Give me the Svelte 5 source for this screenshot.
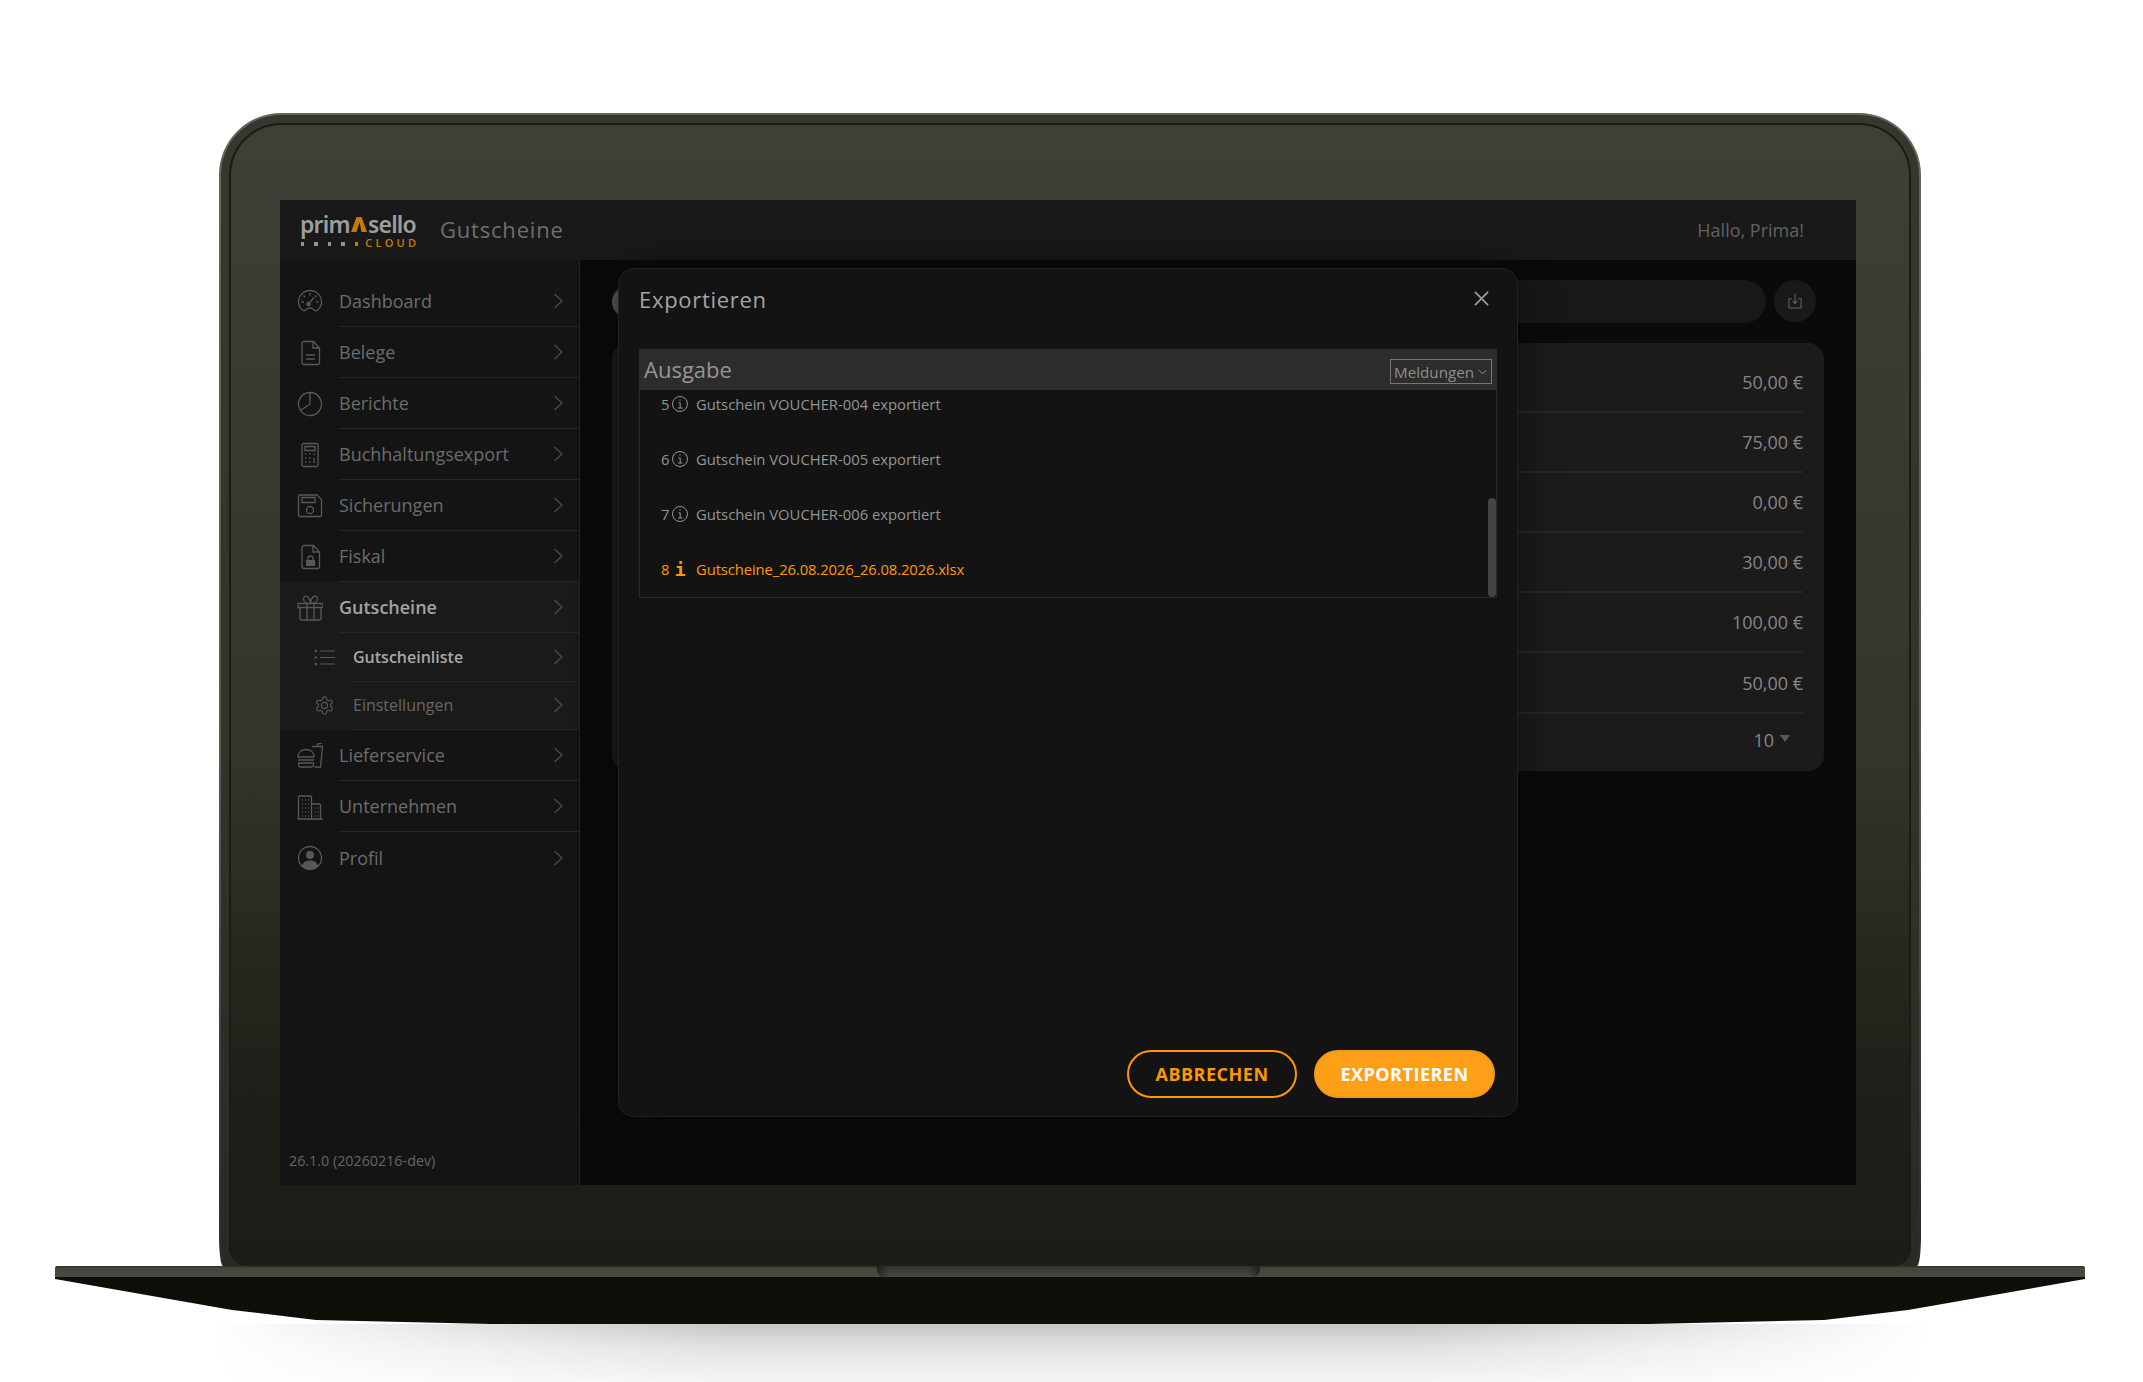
<script>
	const icons = {
		dashboard: 'M6 21.5C3.5 19.5 1.5 16.500 1.5 13a11.5 11.5 0 0 1 23 0c0 3.500-2 6.500-4.500 8.500-1.500 1-2.500-.5-3.500-1.300-2-1.400-5-1.400-7 0-1 .8-2 2.300-3.500 1.300zM13 4v2.500M6.500 6.500 8 8M19.500 6.500 18 8M4.500 13H7M19 13h2.500M11.500 15 17 8.500',
		doc: 'M7 1.5h9.500l6 6.500v14.500a2 2 0 0 1-2 2H7a2 2 0 0 1-2-2v-19a2 2 0 0 1 2-2zM16 1.5V8h6.500M9 15h9M9 19h9',
		pie: 'M13 1.500a11.500 11.500 0 1 1-9.500 18L13 13zM13 1.500A11.500 11.500 0 0 0 3.500 19.500',
		calc: 'M6.500 1.500h13A1.500 1.500 0 0 1 21 3v20a1.500 1.500 0 0 1-1.500 1.500h-13A1.500 1.500 0 0 1 5 23V3a1.500 1.500 0 0 1 1.500-1.500zM8 4.500h10v4H8zM8 12h1.500M12 12h1.500M16.500 12H18M8 16h1.500M12 16h1.500M8 20h1.500M12 20h1.500M17 16v5',
		disk: 'M3 2h17l4.500 4.500V22a1.500 1.500 0 0 1-1.500 1.500H3A1.500 1.500 0 0 1 1.500 22V3.500A1.500 1.500 0 0 1 3 2zM5 4.500h13v5H5zM16.500 17a3.500 3.500 0 1 1-7 0 3.500 3.500 0 0 1 7 0z',
		lock: 'M7 1.500h9.500l6 6.500v14.500a2 2 0 0 1-2 2H7a2 2 0 0 1-2-2v-19a2 2 0 0 1 2-2zM16 1.500V8h6.500M11 16v-1.500a2.500 2.500 0 0 1 5 0V16',
		gift: 'M1 8.500h25v4H1zM3 12.500v11A1.500 1.500 0 0 0 4.500 25h18a1.500 1.500 0 0 0 1.500-1.500v-11M10 8.500V25M17 8.500V25M13.500 8.500C10 8.500 6.500 7 6.500 4s3-3.500 4.500-2 2.500 3.500 2.500 6.500zM13.500 8.500c3.500 0 7-1.500 7-4.500s-3-3.500-4.500-2-2.500 3.500-2.500 6.500z',
		food: 'M1 14c0-5 3.500-7.500 8-7.500s8 2.500 8 7.500zM1 17h16M1.500 20h15v1.500a2.500 2.500 0 0 1-2.500 2.500H4a2.500 2.500 0 0 1-2.500-2.500zM15 3.500h10.500l-2 20.500h-6M20 3.500 21 .8l4-.5',
		build: 'M1.500 25V3a1 1 0 0 1 1-1h11a1 1 0 0 1 1 1v22M14.500 10h8a1 1 0 0 1 1 1v14M.5 25h25M5 6h1M8 6h1M11 6h1M5 10h1M8 10h1M11 10h1M5 14h1M8 14h1M11 14h1M5 18h1M8 18h1M11 18h1M5 22h1M8 22h1M11 22h1M17.500 14h1M20.500 14h1M17.500 18h1M20.500 18h1M17.500 22h1M20.500 22h1',
		user: 'M24.500 13a11.500 11.500 0 1 1-23 0 11.500 11.500 0 0 1 23 0z'
	};
	const gear = 'M12.22 2h-.44a2 2 0 0 0-2 2v.18a2 2 0 0 1-1 1.730l-.43.25a2 2 0 0 1-2 0l-.15-.08a2 2 0 0 0-2.730.730l-.22.38a2 2 0 0 0 .73 2.730l.15.1a2 2 0 0 1 1 1.720v.51a2 2 0 0 1-1 1.740l-.15.09a2 2 0 0 0-.73 2.730l.22.38a2 2 0 0 0 2.730.73l.15-.08a2 2 0 0 1 2 0l.43.25a2 2 0 0 1 1 1.730V20a2 2 0 0 0 2 2h.44a2 2 0 0 0 2-2v-.18a2 2 0 0 1 1-1.730l.43-.25a2 2 0 0 1 2 0l.15.08a2 2 0 0 0 2.730-.73l.22-.39a2 2 0 0 0-.73-2.730l-.15-.08a2 2 0 0 1-1-1.740v-.5a2 2 0 0 1 1-1.740l.15-.09a2 2 0 0 0 .73-2.730l-.22-.38a2 2 0 0 0-2.730-.73l-.15.08a2 2 0 0 1-2 0l-.43-.25a2 2 0 0 1-1-1.730V4a2 2 0 0 0-2-2z';

	const before = [
		{ label: 'Dashboard', icon: 'dashboard' },
		{ label: 'Belege', icon: 'doc' },
		{ label: 'Berichte', icon: 'pie' },
		{ label: 'Buchhaltungsexport', icon: 'calc' },
		{ label: 'Sicherungen', icon: 'disk' },
		{ label: 'Fiskal', icon: 'lock' }
	];
	const after = [
		{ label: 'Lieferservice', icon: 'food' },
		{ label: 'Unternehmen', icon: 'build' },
		{ label: 'Profil', icon: 'user' }
	];
	const amounts = ['50,00 €', '75,00 €', '0,00 €', '30,00 €', '100,00 €', '50,00 €'];
	const log = [
		{ n: 5, text: 'Gutschein VOUCHER-004 exportiert' },
		{ n: 6, text: 'Gutschein VOUCHER-005 exportiert' },
		{ n: 7, text: 'Gutschein VOUCHER-006 exportiert' },
		{ n: 8, text: 'Gutscheine_26.08.2026_26.08.2026.xlsx', file: true }
	];
</script>

{#snippet navIcon(name)}
	<svg class="nav-icon" viewBox="0 0 26 26" fill="none" stroke="currentColor" stroke-width="1.3">
		<path d={icons[name]} />
		{#if name === 'dashboard'}
			<circle cx="11.500" cy="15" r="1.600" fill="currentColor" />
		{/if}
		{#if name === 'lock'}
			<rect x="9" y="16" width="9" height="6" fill="currentColor" stroke="none" />
		{/if}
		{#if name === 'user'}
			<circle cx="13" cy="10" r="4" fill="currentColor" stroke="none" />
			<path d="M5 21c1-4 4-5.500 8-5.500s7 1.500 8 5.500c-2 2-5 3.500-8 3.500s-6-1.500-8-3.500z" fill="currentColor" stroke="none" />
		{/if}
	</svg>
{/snippet}

{#snippet chevron()}
	<svg class="chevron" viewBox="0 0 10 16" fill="none" stroke="currentColor" stroke-width="1.3">
		<path d="M1.500 1 9 8l-7.500 7" />
	</svg>
{/snippet}

{#snippet navRow(item, active)}
	<div class="row" class:active>
		<div class="icon-cell">{@render navIcon(item.icon)}</div>
		<div class="row-body">
			<span>{item.label}</span>
			{@render chevron()}
		</div>
	</div>
{/snippet}

<div class="page">
	<div class="lid">
		<div class="shell">
			<div class="bezel">
				<div class="screen">
					<header class="topbar">
						<div class="logo">
							<div class="logo-word">
								<span>prim</span>
								<svg class="logo-mark" viewBox="0 0 16 15"><path d="M5.500 0h5L16 15h-5.500L8.500 5 5.500 15H0z" fill="#c67b06" /></svg>
								<span>sello</span>
							</div>
							<div class="logo-sub">
								<div class="dots">
									<i></i><i></i><i></i><i></i><i class="last"></i>
								</div>
								<span>CLOUD</span>
							</div>
						</div>
						<div class="page-title">Gutscheine</div>
						<div class="hello">Hallo, Prima!</div>
					</header>

					<div class="body">
						<aside class="sidebar">
							{#each before as item}
								{@render navRow(item, false)}
							{/each}
							<div class="group">
								{@render navRow({ label: 'Gutscheine', icon: 'gift' }, true)}
								<div class="sub active">
									<div class="icon-cell">
										<svg class="sub-icon" viewBox="0 0 21 21" fill="none" stroke="currentColor" stroke-width="1.2">
											<path d="M6 4h15M6 10.500h15M6 17h15" />
											<circle cx="1.800" cy="4" r="1.300" fill="currentColor" stroke="none" />
											<circle cx="1.800" cy="10.500" r="1.300" fill="currentColor" stroke="none" />
											<circle cx="1.800" cy="17" r="1.300" fill="currentColor" stroke="none" />
										</svg>
									</div>
									<div class="row-body">
										<span>Gutscheinliste</span>
										{@render chevron()}
									</div>
								</div>
								<div class="sub">
									<div class="icon-cell">
										<svg class="sub-icon" viewBox="0 0 24 24" fill="none" stroke="currentColor" stroke-width="1.300">
											<path d={gear} />
											<circle cx="12" cy="12" r="3.500" />
										</svg>
									</div>
									<div class="row-body">
										<span>Einstellungen</span>
										{@render chevron()}
									</div>
								</div>
							</div>
							{#each after as item}
								{@render navRow(item, false)}
							{/each}
							<div class="version">26.1.0 (20260216-dev)</div>
						</aside>

						<main class="main">
							<div class="toolbar">
								<div class="search"><span class="search-btn"></span></div>
								<div class="round-btn">
									<svg viewBox="0 0 16 18" fill="none" stroke="currentColor" stroke-width="1.2">
										<path d="M4.500 6.500H2a1 1 0 0 0-1 1V16a1 1 0 0 0 1 1h12a1 1 0 0 0 1-1V7.500a1 1 0 0 0-1-1h-2.500M8 .5V12M5 9l3 3 3-3" />
									</svg>
								</div>
							</div>
							<div class="card">
								{#each amounts as amount}
									<div class="amount-row">{amount}</div>
								{/each}
								<div class="pager">10 <span class="caret"></span></div>
							</div>
						</main>
					</div>

					<div class="modal">
						<div class="modal-head">
							<h2>Exportieren</h2>
							<svg class="close" viewBox="0 0 16 16" fill="none" stroke="currentColor" stroke-width="1.7">
								<path d="M1 1l14 14M15 1 1 15" />
							</svg>
						</div>
						<div class="output-head">
							<span>Ausgabe</span>
							<div class="select">
								Meldungen
								<svg viewBox="0 0 10 6" fill="none" stroke="currentColor" stroke-width="1"><path d="M1 1l4 4 4-4" /></svg>
							</div>
						</div>
						<div class="output-body">
							<div class="log">
								{#each log as line}
									<div class="log-row" class:file={line.file}>
										<span class="num">{line.n}</span>
										{#if line.file}
											<span class="mono-i">i</span>
										{:else}
											<svg class="info" viewBox="0 0 16 16" fill="none" stroke="currentColor" stroke-width="1">
												<circle cx="8" cy="8" r="7.500" />
												<path d="M6.500 6.800H8.200V12M6 12h4.500M8 3.500v1.300" />
											</svg>
										{/if}
										<span>{line.text}</span>
									</div>
								{/each}
							</div>
							<div class="scrollbar"></div>
						</div>
						<div class="modal-actions">
							<button class="btn ghost">ABBRECHEN</button>
							<button class="btn solid">EXPORTIEREN</button>
						</div>
					</div>
				</div>
			</div>
		</div>
	</div>

	<div class="base">
		<div class="base-strip"><div class="notch"></div></div>
		<div class="base-body"></div>
	</div>
	<div class="floor"></div>
</div>

<style>
	:global(body) {
		margin: 0;
		background: #fff;
	}

	.page {
		width: 2143px;
		height: 1382px;
		overflow: hidden;
		box-sizing: border-box;
		padding-top: 113px;
		font-family: 'Open Sans', sans-serif;
		background: #fff;
	}

	/* Laptop: three nested rings around the screen */
	.lid {
		box-sizing: border-box;
		width: 1702px;
		height: 1153px;
		margin-left: 219px;
		padding: 2px 2px 0;
		border-radius: 62px 62px 4px 4px / 62px 62px 30px 30px;
		background: linear-gradient(180deg, #65655c 0%, #5a5a51 55%, #2c2c27 100%);
	}

	.shell {
		box-sizing: border-box;
		height: 100%;
		padding: 8px 8px 0;
		border-radius: 60px 60px 3px 3px / 60px 60px 28px 28px;
		background: linear-gradient(180deg, #37372f 0%, #33332b 55%, #2a2a25 100%);
	}

	.bezel {
		box-sizing: border-box;
		height: 100%;
		padding: 75px 53px 0 49px;
		border: 2px solid #1b1b16;
		border-bottom: 0;
		border-radius: 52px 52px 18px 18px;
		background: linear-gradient(180deg, #3f3f37 0%, #34342c 55%, #1f1f19 85%, #1d1d17 100%);
	}

	.screen {
		position: relative;
		display: flex;
		flex-direction: column;
		height: 985px;
		background: #0a0a0a;
		overflow: hidden;
	}

	.base {
		width: 2030px;
		margin-left: 55px;
	}

	.base-strip {
		position: relative;
		height: 11px;
		background: linear-gradient(180deg, #2e2e28 0%, #45453e 20%, #4a4a43 100%);
		border-radius: 2px 2px 0 0;
	}

	.notch {
		position: absolute;
		left: 822px;
		top: 0;
		box-sizing: border-box;
		width: 383px;
		height: 13px;
		background:
			linear-gradient(90deg, rgba(0, 0, 0, 0.4) 0, transparent 12px, transparent 371px, rgba(0, 0, 0, 0.4) 383px),
			linear-gradient(180deg, #33332d 0%, #44443d 70%, #55554d 100%);
		border-radius: 0 0 10px 10px;
	}

	.base-body {
		height: 47px;
		background: #0f0f0a;
		clip-path: polygon(0 2px, 177px 33px, 261px 43px, 436px 47px, 1594px 47px, 1769px 43px, 1853px 33px, 2030px 2px, 2030px 0, 0 0);
	}

	.floor {
		width: 1720px;
		height: 60px;
		margin-left: 210px;
		background: linear-gradient(180deg, #c6c6c6 0%, #e2e2e2 40%, #f6f6f6 100%);
		mask-image: linear-gradient(90deg, transparent 0%, #000 30%, #000 70%, transparent 100%);
	}

	/* Top bar */
	.topbar {
		display: flex;
		align-items: center;
		flex: 0 0 60px;
		padding: 0 52px 0 20px;
		background: #191919;
	}

	.logo {
		width: 116px;
		margin-right: 24px;
	}

	.logo-word {
		display: flex;
		align-items: flex-end;
		justify-content: space-between;
		height: 24px;
		font-family: 'Noto Sans', sans-serif;
		font-size: 23px;
		font-weight: 600;
		line-height: 24px;
		letter-spacing: -0.8px;
		color: #9e9e9e;
	}

	.logo-mark {
		flex: 0 0 16px;
		height: 15px;
		margin-bottom: 4px;
	}

	.logo-sub {
		display: flex;
		align-items: center;
		justify-content: space-between;
		height: 11px;
		margin-top: 1px;
		font-size: 11px;
		font-weight: 600;
		line-height: 11px;
		letter-spacing: 3.200px;
		color: #c67b06;
	}

	.logo-sub span {
		margin-right: -3.200px;
	}

	.dots {
		display: flex;
		gap: 10px;
		padding: 3px 0 0 1px;
	}

	.dots i {
		width: 3.400px;
		height: 3.400px;
		background: #a3937c;
	}

	.dots i.last {
		background: #c67b06;
	}

	.page-title {
		padding-bottom: 2px;
		font-size: 22px;
		letter-spacing: 0.800px;
		color: #6f6f6f;
	}

	.hello {
		margin-left: auto;
		font-size: 18px;
		color: #626262;
	}

	.body {
		display: flex;
		flex: 1;
		min-height: 0;
	}

	/* Sidebar */
	.sidebar {
		display: flex;
		flex-direction: column;
		box-sizing: border-box;
		flex: 0 0 300px;
		padding-top: 16px;
		background: #141414;
		border-right: 1px solid #232323;
		color: #6c6c6c;
	}

	.row,
	.sub {
		display: flex;
		align-items: stretch;
	}

	.row {
		height: 51px;
		font-size: 18px;
	}

	.icon-cell {
		display: flex;
		align-items: center;
		box-sizing: border-box;
		flex: 0 0 59px;
		padding-left: 17px;
		color: #585858;
	}

	.nav-icon {
		width: 26px;
		height: 26px;
	}

	.row-body {
		display: flex;
		align-items: center;
		justify-content: space-between;
		flex: 1;
		padding-right: 16px;
		border-bottom: 1px solid #262626;
	}

	.row:nth-last-child(2) .row-body {
		border-bottom: 0;
	}

	.chevron {
		width: 10px;
		height: 16px;
		color: #4c4c4c;
	}

	.group {
		background: #1a1a1a;
	}

	.row.active {
		font-weight: 600;
		color: #a3a3a3;
	}

	.sub {
		height: 48.500px;
		font-size: 16px;
		color: #666;
	}

	.sub.active {
		font-weight: 600;
		color: #a8a8a8;
	}

	.sub .icon-cell {
		flex-basis: 73px;
		padding-left: 34px;
	}

	.sub-icon {
		width: 21px;
		height: 21px;
	}

	.version {
		margin-top: auto;
		padding: 0 0 15px 9px;
		font-size: 14.300px;
		color: #666;
	}

	/* Page behind the dialog */
	.main {
		flex: 1;
		padding: 20px 32px 0;
	}

	.toolbar {
		display: flex;
		gap: 8px;
		padding-right: 8px;
	}

	.search {
		display: flex;
		align-items: center;
		flex: 1;
		height: 43px;
		border-radius: 22px;
		background: #181818;
	}

	.search-btn {
		width: 30px;
		height: 30px;
		border-radius: 50%;
		background: #555;
	}

	.round-btn {
		display: flex;
		align-items: center;
		justify-content: center;
		width: 42px;
		height: 42px;
		border-radius: 50%;
		background: #191919;
		color: #666;
	}

	.round-btn svg {
		width: 14px;
		height: 16px;
	}

	.card {
		box-sizing: border-box;
		height: 428px;
		margin-top: 20px;
		padding: 10px 21px 0;
		border-radius: 16px;
		background: #1b1b1b;
		font-size: 18px;
		color: #868686;
	}

	.amount-row {
		display: flex;
		align-items: center;
		justify-content: flex-end;
		box-sizing: border-box;
		height: 60px;
		border-bottom: 2px solid #262626;
	}

	.amount-row:nth-child(6) {
		height: 61px;
		padding-top: 1px;
	}

	.pager {
		display: flex;
		align-items: center;
		justify-content: flex-end;
		gap: 6px;
		height: 52px;
		padding-right: 13px;
	}

	.caret {
		margin-bottom: 4px;
		border: 5.500px solid transparent;
		border-top: 7px solid #5a5a5a;
		border-bottom: 0;
	}

	/* Dialog */
	.modal {
		position: absolute;
		left: 338px;
		top: 68px;
		display: flex;
		flex-direction: column;
		box-sizing: border-box;
		width: 900px;
		height: 849px;
		padding: 0 20px;
		border: 1px solid #222;
		border-radius: 16px;
		background: #131313;
		box-shadow: 0 0 40px rgba(0, 0, 0, 0.45);
	}

	.modal-head {
		display: flex;
		align-items: center;
		justify-content: space-between;
		height: 60px;
		margin-bottom: 20px;
		padding-right: 8px;
	}

	h2 {
		margin: 0;
		font-size: 22px;
		font-weight: 400;
		letter-spacing: 0.700px;
		color: #a4a4a4;
	}

	.close {
		width: 15px;
		height: 15px;
		margin-bottom: 2px;
		color: #a0a0a0;
	}

	.output-head {
		display: flex;
		align-items: center;
		justify-content: space-between;
		height: 41px;
		padding: 0 5px;
		background: #2c2c2c;
		font-size: 22px;
		color: #959595;
	}

	.output-head > span {
		padding-bottom: 2px;
	}

	.select {
		display: flex;
		align-items: center;
		gap: 4px;
		box-sizing: border-box;
		width: 102px;
		height: 25px;
		margin-top: 4px;
		padding-left: 3px;
		border: 1px solid #767676;
		font-size: 15.200px;
		color: #8c8c8c;
	}

	.select svg {
		width: 9px;
		height: 6px;
		color: #a0a0a0;
	}

	.output-body {
		position: relative;
		box-sizing: border-box;
		height: 208px;
		overflow: hidden;
		border: 1px solid #2a2a2a;
		border-top: 0;
	}

	.log {
		margin-top: -13px;
		padding-left: 21px;
	}

	.log-row {
		display: flex;
		align-items: center;
		height: 54.800px;
		font-size: 14.800px;
		font-weight: 500;
		color: #959595;
	}

	.log-row.file {
		color: #ff9800;
		letter-spacing: -0.100px;
	}

	.num {
		width: 10px;
		margin-right: 1px;
	}

	.info {
		width: 16px;
		height: 16px;
		margin-right: 8px;
	}

	.mono-i {
		width: 16px;
		margin-right: 8px;
		padding-top: 3px;
		font-family: 'DejaVu Sans Mono', monospace;
		font-size: 18px;
		font-weight: 700;
		line-height: 1;
		text-align: center;
	}

	.scrollbar {
		position: absolute;
		right: 0;
		bottom: 0;
		width: 8px;
		height: 99px;
		border-radius: 4px;
		background: #444;
	}

	.modal-actions {
		display: flex;
		justify-content: flex-end;
		gap: 17px;
		margin-top: auto;
		padding: 0 2px 18px 0;
	}

	.btn {
		box-sizing: border-box;
		height: 48px;
		border-radius: 25px;
		border: 2px solid #ff9800;
		font-family: inherit;
		font-size: 18px;
		font-weight: 700;
		letter-spacing: 0.500px;
	}

	.ghost {
		width: 170px;
		background: transparent;
		color: #ff9800;
	}

	.solid {
		width: 181px;
		border-color: #f09a1c;
		background: #ff9f18;
		color: #fff;
	}
</style>
